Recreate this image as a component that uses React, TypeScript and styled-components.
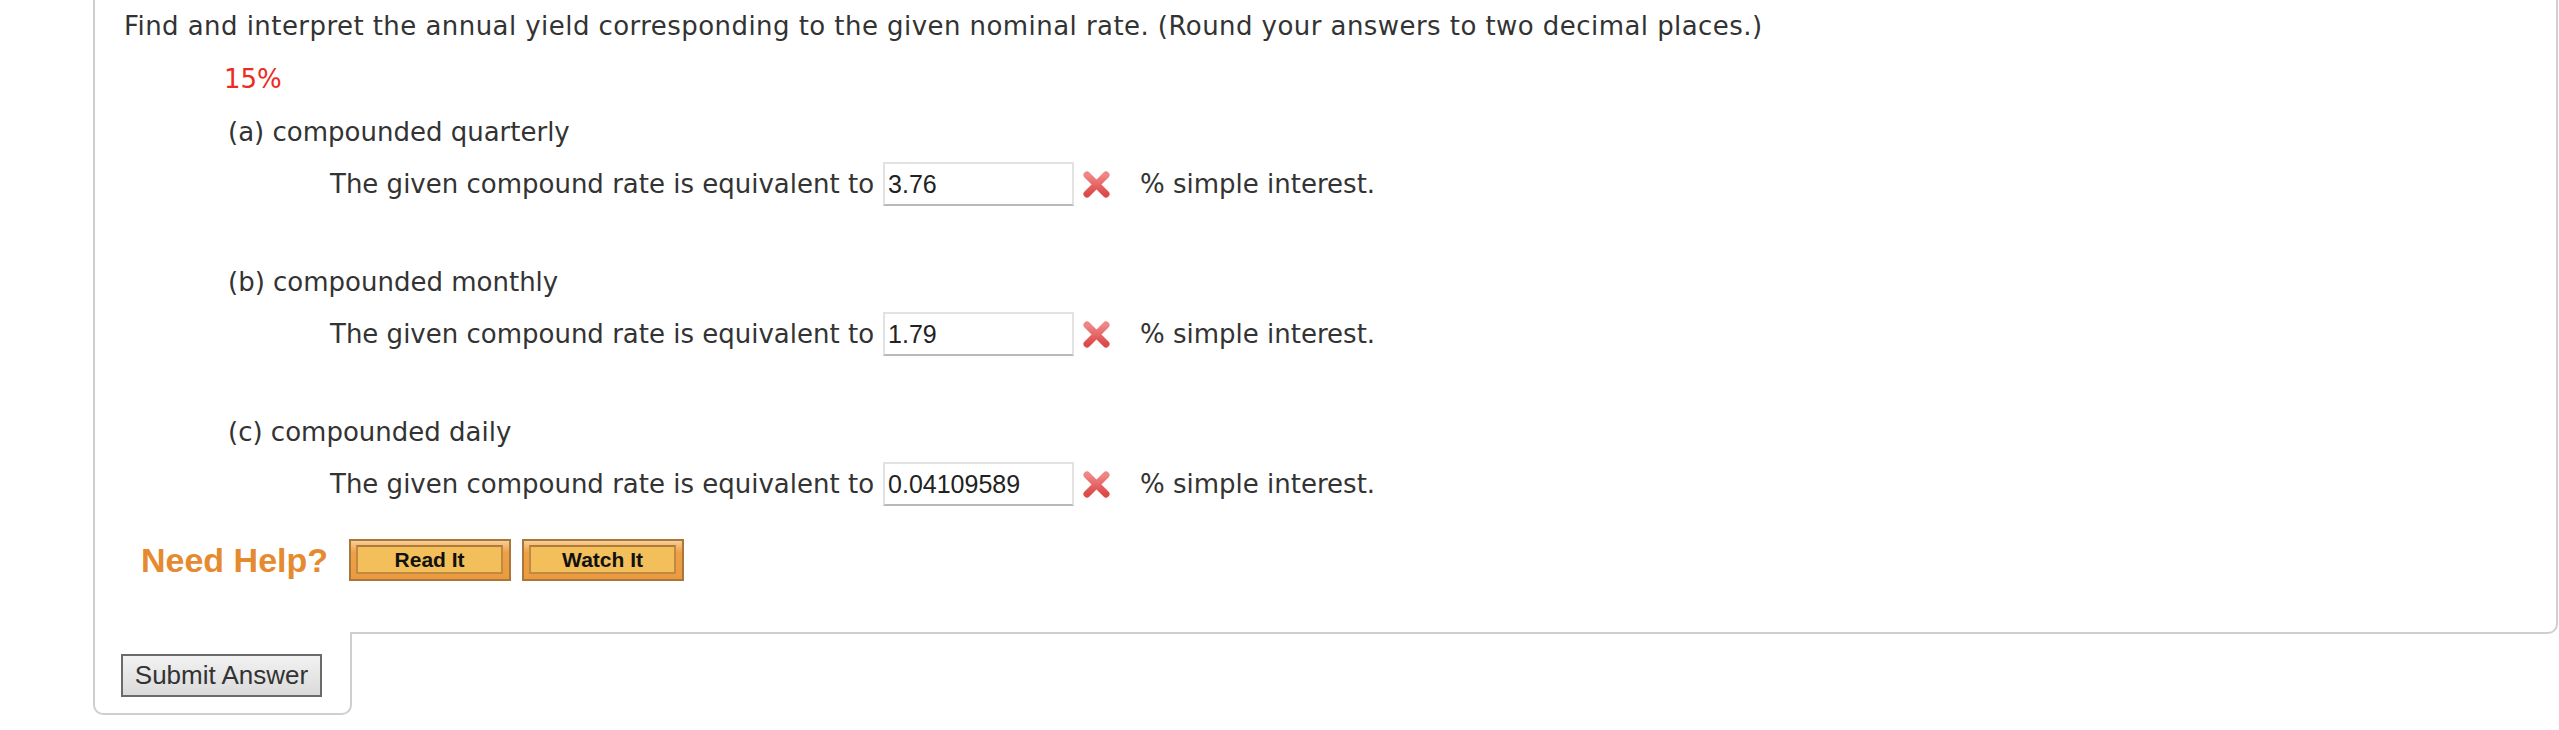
import React from "react";
import styled, { createGlobalStyle } from "styled-components";

const Global = createGlobalStyle`
  html, body { margin: 0; padding: 0; background: #fff; }
  body { font-family: "DejaVu Sans", Verdana, sans-serif; color: #333; }
`;

const Page = styled.div`
  display: flex;
  flex-direction: column;
  margin: 0 1px 0 93px;
`;

const Box = styled.div`
  border: 2px solid #cfcfcf;
  border-top: none;
  border-bottom-right-radius: 10px;
  padding: 11px 0 51px 29px;
  display: flex;
  flex-direction: column;
  font-size: 26px;
  line-height: 30px;
`;

const Title = styled.div`
  color: #333;
  letter-spacing: 0.44px;
`;

const Rate = styled.div`
  color: #ee2b1f;
  margin: 23px 0 0 100px;
`;

const Part = styled.div<{ first?: boolean }>`
  margin: ${(p) => (p.first ? "23px" : "61px")} 0 0 104px;
`;

const Row = styled.div`
  display: flex;
  align-items: center;
  margin: 15px 0 0 206px;
`;

const Input = styled.div`
  box-sizing: border-box;
  width: 191px;
  height: 44px;
  margin-left: 9px;
  border: 2px solid #e2e2e2;
  border-bottom-color: #b9b9b9;
  padding-left: 3px;
  display: flex;
  align-items: center;
  font-family: "Liberation Sans", Arial, sans-serif;
  font-size: 25px;
  color: #222;
`;

const Mark = styled.svg`
  margin-left: 9px;
  width: 27px;
  height: 27px;
`;

const After = styled.span`
  margin-left: 30px;
`;

const HelpRow = styled.div`
  display: flex;
  align-items: center;
  margin: 33px 0 0 17px;
`;

const HelpLabel = styled.span`
  font-family: "Liberation Sans", Arial, sans-serif;
  font-weight: bold;
  font-size: 34px;
  color: #e68a30;
  margin-right: 21px;
  line-height: 40px;
`;

const HelpButton = styled.div`
  box-sizing: border-box;
  width: 162px;
  height: 42px;
  margin-right: 11px;
  border: 2px solid #a8773a;
  background: linear-gradient(#f6cf98, #eea048 30%, #eb9a3f);
  padding: 4px 6px 5px 5px;
  display: flex;
`;

const HelpInner = styled.span`
  flex: 1;
  border: 2px solid #c08a42;
  border-top-color: #b07a38;
  background: #f2bf5a;
  display: flex;
  align-items: center;
  justify-content: center;
  font-family: "Liberation Sans", Arial, sans-serif;
  font-weight: bold;
  font-size: 21px;
  color: #111;
`;

const Tab = styled.div`
  align-self: flex-start;
  box-sizing: border-box;
  width: 259px;
  margin-top: -2px;
  background: #fff;
  border: 2px solid #cfcfcf;
  border-top: none;
  border-radius: 0 0 10px 10px;
  padding: 22px 0 16px 26px;
`;

const Submit = styled.button`
  box-sizing: border-box;
  width: 201px;
  height: 43px;
  border: 2px solid #6a6a6a;
  background: linear-gradient(#f2f2f2, #dadada);
  font-family: "Liberation Sans", Arial, sans-serif;
  font-size: 26px;
  color: #333;
  padding: 0;
  border-radius: 0;
`;

const WrongMark = () => (
  <Mark viewBox="0 0 27 27">
    <defs>
      <linearGradient id="xg" x1="0" y1="0" x2="0" y2="1">
        <stop offset="0" stopColor="#f08686" />
        <stop offset="1" stopColor="#dc4a4a" />
      </linearGradient>
    </defs>
    <path d="M4 4 L23 23 M23 4 L4 23" stroke="url(#xg)" strokeWidth="7" strokeLinecap="round" fill="none" />
  </Mark>
);

const parts = [
  { label: "(a) compounded quarterly", value: "3.76" },
  { label: "(b) compounded monthly", value: "1.79" },
  { label: "(c) compounded daily", value: "0.04109589" },
];

export default function App() {
  return (
    <>
      <Global />
      <Page>
        <Box>
          <Title>
            Find and interpret the annual yield corresponding to the given nominal rate. (Round your answers to two decimal places.)
          </Title>
          <Rate>15%</Rate>
          {parts.map((p, i) => (
            <React.Fragment key={p.label}>
              <Part first={i === 0}>{p.label}</Part>
              <Row>
                <span>The given compound rate is equivalent to</span>
                <Input>{p.value}</Input>
                <WrongMark />
                <After>% simple interest.</After>
              </Row>
            </React.Fragment>
          ))}
          <HelpRow>
            <HelpLabel>Need Help?</HelpLabel>
            <HelpButton><HelpInner>Read It</HelpInner></HelpButton>
            <HelpButton><HelpInner>Watch It</HelpInner></HelpButton>
          </HelpRow>
        </Box>
        <Tab>
          <Submit>Submit Answer</Submit>
        </Tab>
      </Page>
    </>
  );
}
